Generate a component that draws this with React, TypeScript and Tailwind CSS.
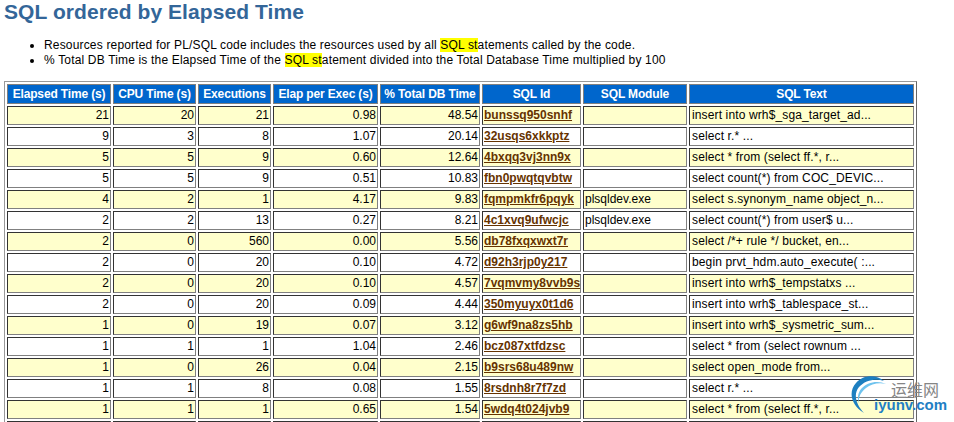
import React from 'react'

// [elapsed, cpu, execs, elap per exec, % total, sql id, module, text]
const rows: string[][] = [
  ['21', '20', '21', '0.98', '48.54', 'bunssq950snhf', '', 'insert into wrh$_sga_target_ad...'],
  ['9', '3', '8', '1.07', '20.14', '32usqs6xkkptz', '', 'select r.* ...'],
  ['5', '5', '9', '0.60', '12.64', '4bxqq3vj3nn9x', '', 'select * from (select ff.*, r...'],
  ['5', '5', '9', '0.51', '10.83', 'fbn0pwqtqvbtw', '', 'select count(*) from COC_DEVIC...'],
  ['4', '2', '1', '4.17', '9.83', 'fqmpmkfr6pqyk', 'plsqldev.exe', 'select s.synonym_name object_n...'],
  ['2', '2', '13', '0.27', '8.21', '4c1xvq9ufwcjc', 'plsqldev.exe', 'select count(*) from user$ u...'],
  ['2', '0', '560', '0.00', '5.56', 'db78fxqxwxt7r', '', 'select /*+ rule */ bucket, en...'],
  ['2', '0', '20', '0.10', '4.72', 'd92h3rjp0y217', '', 'begin prvt_hdm.auto_execute( :...'],
  ['2', '0', '20', '0.10', '4.57', '7vqmvmy8vvb9s', '', 'insert into wrh$_tempstatxs ...'],
  ['2', '0', '20', '0.09', '4.44', '350myuyx0t1d6', '', 'insert into wrh$_tablespace_st...'],
  ['1', '0', '19', '0.07', '3.12', 'g6wf9na8zs5hb', '', 'insert into wrh$_sysmetric_sum...'],
  ['1', '1', '1', '1.04', '2.46', 'bcz087xtfdzsc', '', 'select * from (select rownum ...'],
  ['1', '0', '26', '0.04', '2.15', 'b9srs68u489nw', '', 'select open_mode from...'],
  ['1', '1', '8', '0.08', '1.55', '8rsdnh8r7f7zd', '', 'select r.* ...'],
  ['1', '1', '1', '0.65', '1.54', '5wdq4t024jvb9', '', 'select * from (select ff.*, r...'],
  // only the top edge of this row is in the window
  ['', '', '', '', '', '', '', ''],
]

const headers = ['Elapsed Time (s)', 'CPU Time (s)', 'Executions', 'Elap per Exec (s)', '% Total DB Time', 'SQL Id', 'SQL Module', 'SQL Text']
const widths = ['w-[104px]', 'w-[83px]', 'w-[73px]', 'w-[105px]', 'w-[100px]', 'w-[99px]', 'w-[104px]', 'w-[225px]']

const cellBorder = 'border border-t-[#333333] border-l-[#333333] border-r-[#808080] border-b-[#808080] px-px py-0 h-[19px] leading-[15px] text-[12px]'

function Watermark() {
  return (
    <div className="absolute left-[850px] top-[374px] w-[104px] h-[46px] font-['Liberation_Sans',sans-serif]">
      <svg className="absolute left-0 top-0" width="46" height="46" viewBox="0 0 46 46" fill="none">
        <path d="M34 7C27 1 14 0 6 9C-2 18 1 31 14 39C6 31 3 20 9 13C15 6 26 4 34 7Z" fill="#1d7fc0" />
        <path d="M36 10C28 6 17 8 11 15C8 19 7 24 9 29C8 23 11 18 16 14C21 10 29 8 36 10Z" fill="#6fc3ee" />
      </svg>
      <span className="absolute left-[41px] top-[7px] text-[16px] leading-[16px] text-[#858585] font-['Noto_Sans_CJK_SC',sans-serif]">运维网</span>
      <span className="absolute left-[24px] top-[24px] text-[15px] leading-[14px] font-bold text-[#1f7fc4]">iyunv.com</span>
    </div>
  )
}

export default function App() {
  return (
    <div className="relative h-[422px] w-[954px] overflow-hidden bg-white font-['Liberation_Sans',Arial,sans-serif] text-black">
      <div className="pl-1">
        <h1 className="text-[21px] leading-[23px] font-bold tracking-[0.07px] text-[#336699]">SQL ordered by Elapsed Time</h1>
        <ul className="mt-[15px] list-disc pl-10 text-[12px] leading-[15px] tracking-[0.17px]">
          <li>
            Resources reported for PL/SQL code includes the resources used by all{' '}
            <span className="bg-[#ffff00]">SQL st</span>atements called by the code.
          </li>
          <li>
            % Total DB Time is the Elapsed Time of the <span className="bg-[#ffff00]">SQL st</span>atement divided into the Total Database Time multiplied by 100
          </li>
        </ul>
        <table className="mt-[13px] table-fixed w-[913px] border-separate border-spacing-[2px] border border-t-[#999999] border-l-[#999999] border-r-[#666666] border-b-[#333333]">
          <colgroup>
            {widths.map((w, i) => (
              <col key={i} className={w} />
            ))}
          </colgroup>
          <thead>
            <tr>
              {headers.map((h) => (
                <th key={h} className="h-[20px] border border-[#808080] bg-[#0066cc] p-0 text-center text-[12px] font-bold leading-[15px] tracking-[-0.15px] text-white whitespace-nowrap">
                  {h}
                </th>
              ))}
            </tr>
          </thead>
          <tbody>
            {rows.map((r, i) => {
              const bg = i % 2 === 0 ? 'bg-[#ffffcc]' : 'bg-white'
              return (
                <tr key={i}>
                  {r.slice(0, 5).map((v, j) => (
                    <td key={j} className={`${cellBorder} ${bg} text-right`}>{v}</td>
                  ))}
                  <td className={`${cellBorder} ${bg} text-left font-bold`}>
                    <a href="#" className="text-[#663300] underline">{r[5]}</a>
                  </td>
                  <td className={`${cellBorder} ${bg} text-left`}>{r[6]}</td>
                  <td className={`${cellBorder} ${bg} pl-[2px] text-left whitespace-nowrap tracking-[0.13px]`}>{r[7]}</td>
                </tr>
              )
            })}
          </tbody>
        </table>
      </div>
      <Watermark />
    </div>
  )
}
